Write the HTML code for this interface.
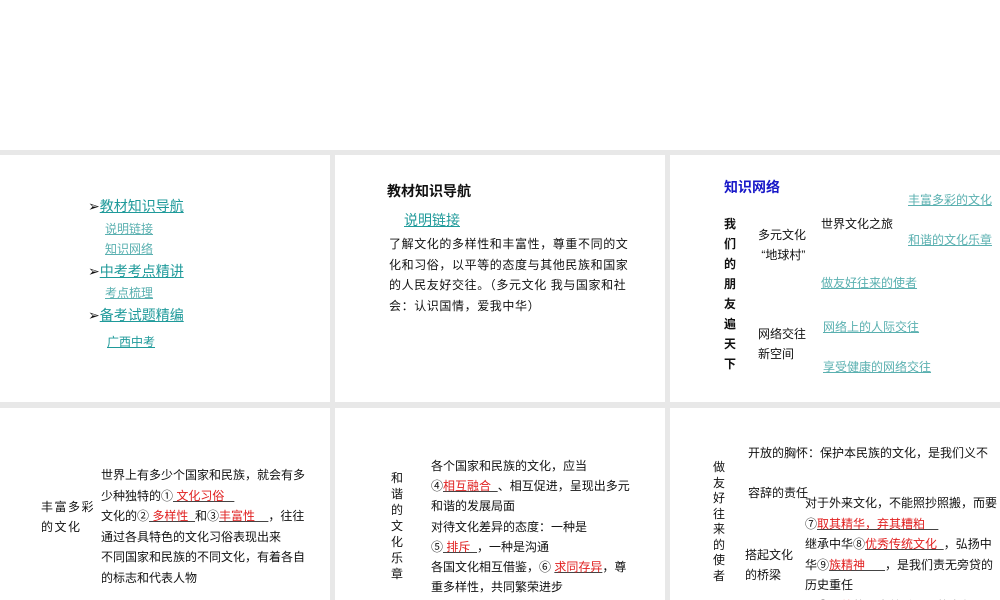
<!DOCTYPE html>
<html><head><meta charset="utf-8"><style>
*{margin:0;padding:0;box-sizing:border-box}
html{width:1000px;height:600px;overflow:hidden}
body{width:1000px;height:600px;background:#e8e8e8;position:relative;overflow:hidden;font-family:"Liberation Sans","Noto Sans CJK SC",sans-serif;color:#111}
.top{position:absolute;left:0;top:0;width:1000px;height:150px;background:#fff}
.p{position:absolute;background:#fff;overflow:hidden}
.a{position:absolute;white-space:nowrap}
.t{color:#1f9a9a;text-decoration:underline}
.l{color:#5ab0b0;text-decoration:underline}
.r{color:#e02020;text-decoration:underline;text-decoration-color:#444}
.s{font-size:12px;line-height:20px}
</style></head><body>
<div class="top"></div>
<div class="p" style="left:0;top:155px;width:330px;height:247px"></div>
<div class="p" style="left:335px;top:155px;width:330px;height:247px"></div>
<div class="p" style="left:670px;top:155px;width:330px;height:247px"></div>
<div class="p" style="left:0;top:408px;width:330px;height:192px"></div>
<div class="p" style="left:335px;top:408px;width:330px;height:192px"></div>
<div class="p" style="left:670px;top:408px;width:330px;height:192px">
<div class="a" style="left:135px;top:85px;font-size:12px;line-height:20.5px">对于外来文化，不能照抄照搬，而要<br>⑦<span class="r">取其精华，弃其糟粕&nbsp;&nbsp;&nbsp;&nbsp;</span><br>继承中华⑧<span class="r">优秀传统文化&nbsp;&nbsp;</span>，弘扬中<br>华⑨<span class="r">族精神&nbsp;&nbsp;&nbsp;&nbsp;&nbsp;&nbsp;</span>，是我们责无旁贷的<br>历史重任<br>以⑩<span class="r">开放</span>的心态尊重不同的文化</div>
</div>

<!-- panel 1 -->
<div class="a" style="left:88px;top:196px;font-size:14px">➢<span class="t">教材知识导航</span></div>
<div class="a l" style="left:105px;top:220px;font-size:12px">说明链接</div>
<div class="a l" style="left:105px;top:240px;font-size:12px">知识网络</div>
<div class="a" style="left:88px;top:261px;font-size:14px">➢<span class="t">中考考点精讲</span></div>
<div class="a l" style="left:105px;top:284px;font-size:12px">考点梳理</div>
<div class="a" style="left:88px;top:305px;font-size:14px">➢<span class="t">备考试题精编</span></div>
<div class="a t" style="left:107px;top:333px;font-size:12px">广西中考</div>

<!-- panel 2 -->
<div class="a" style="left:387px;top:181px;font-size:14px;font-weight:bold">教材知识导航</div>
<div class="a t" style="left:404px;top:210px;font-size:14px">说明链接</div>
<div class="a" style="left:389px;top:234px;font-size:12px;line-height:20.5px;letter-spacing:0.6px">了解文化的多样性和丰富性，尊重不同的文<br>化和习俗，以平等的态度与其他民族和国家<br>的人民友好交往。（多元文化 我与国家和社<br>会：认识国情，爱我中华）</div>

<!-- panel 3 -->
<div class="a" style="left:724px;top:177px;font-size:14px;font-weight:bold;color:#1818c8">知识网络</div>
<div class="a" style="left:724px;top:214px;font-size:12px;font-weight:bold;line-height:20px;width:14px;white-space:normal">我们的朋友遍天下</div>
<div class="a s" style="left:758px;top:225px">多元文化<br>&nbsp;“地球村”</div>
<div class="a s" style="left:821px;top:214px">世界文化之旅</div>
<div class="a l s" style="left:908px;top:190px">丰富多彩的文化</div>
<div class="a l s" style="left:908px;top:230px">和谐的文化乐章</div>
<div class="a l s" style="left:821px;top:273px">做友好往来的使者</div>
<div class="a s" style="left:758px;top:324px">网络交往<br>新空间</div>
<div class="a l s" style="left:823px;top:317px">网络上的人际交往</div>
<div class="a l s" style="left:823px;top:357px">享受健康的网络交往</div>

<!-- panel 4 -->
<div class="a" style="left:41px;top:497px;font-size:12px;line-height:20px;letter-spacing:1.5px">丰富多彩<br>的文化</div>
<div class="a" style="left:101px;top:465px;font-size:12px;line-height:20.5px">世界上有多少个国家和民族，就会有多<br>少种独特的①<span class="r">&nbsp;文化习俗&nbsp;&nbsp;&nbsp;</span><br>文化的②<span class="r">&nbsp;多样性&nbsp;&nbsp;</span>和③<span class="r">丰富性&nbsp;&nbsp;&nbsp;&nbsp;</span>，往往<br>通过各具特色的文化习俗表现出来<br>不同国家和民族的不同文化，有着各自<br>的标志和代表人物</div>

<!-- panel 5 -->
<div class="a" style="left:391px;top:470px;font-size:12px;line-height:16px;width:14px;white-space:normal">和谐的文化乐章</div>
<div class="a" style="left:431px;top:456px;font-size:12px;line-height:20.2px">各个国家和民族的文化，应当<br>④<span class="r">相互融合&nbsp;&nbsp;</span>、相互促进，呈现出多元<br>和谐的发展局面<br>对待文化差异的态度：一种是<br>⑤<span class="r">&nbsp;排斥&nbsp;&nbsp;</span>，一种是沟通<br>各国文化相互借鉴，⑥ <span class="r">求同存异</span>，尊<br>重多样性，共同繁荣进步</div>

<!-- panel 6 -->
<div class="a" style="left:713px;top:460px;font-size:12px;line-height:15.5px;width:14px;white-space:normal">做友好往来的使者</div>
<div class="a s" style="left:748px;top:443px">开放的胸怀：保护本民族的文化，是我们义不</div>
<div class="a s" style="left:748px;top:483px">容辞的责任</div>
<div class="a s" style="left:745px;top:545px">搭起文化<br>的桥梁</div>
</body></html>
